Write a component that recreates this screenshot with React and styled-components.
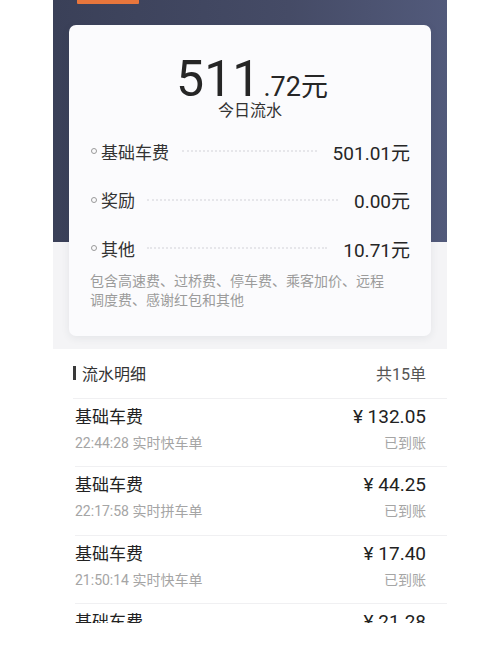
import React from "react";
import styled, { createGlobalStyle } from "styled-components";

const GlobalStyle = createGlobalStyle`
  html, body {
    margin: 0;
    padding: 0;
    background: #ffffff;
  }
  body {
    font-family: "Roboto", "Noto Sans CJK SC", sans-serif;
    color: #262626;
  }
`;

const Page = styled.div`
  width: 500px;
  height: 666px;
  display: flex;
  justify-content: center;
  background: #fff;
`;

const Screen = styled.div`
  width: 394px;
  height: 623px;
  overflow: hidden;
  display: flex;
  flex-direction: column;
  background: #fff;
`;

const Top = styled.div`
  position: relative;
  padding: 25px 16px 13px;
  background:
    linear-gradient(90deg, #3a4058 0%, #454b66 60%, #525a7b 100%) top / 100% 242px no-repeat,
    #f4f4f6;
`;

const OrangeTab = styled.div`
  position: absolute;
  top: 0;
  left: 24px;
  width: 62px;
  height: 4px;
  background: #e8763c;
  border-radius: 0 0 1px 1px;
`;

const Card = styled.div`
  background: #fbfbfd;
  border-radius: 7px;
  box-shadow: 0 2px 8px rgba(40, 45, 70, 0.08);
  padding: 29px 21px 26px;
`;

const Total = styled.div`
  display: flex;
  justify-content: center;
  align-items: baseline;
  line-height: 1;
  color: #262626;
  padding-left: 4px;
`;

const BigNum = styled.span`
  font-size: 50px;
`;

const SmallNum = styled.span`
  font-size: 27px;
  margin-left: 3px;
`;

const TotalLabel = styled.div`
  text-align: center;
  font-size: 16px;
  line-height: 20px;
  color: #333;
  margin-top: -3px;
  margin-bottom: 6px;
`;

const Row = styled.div`
  display: flex;
  align-items: center;
  height: 48.5px;
`;

const Bullet = styled.span`
  width: 4px;
  height: 4px;
  border: 1px solid #9a9a9a;
  border-radius: 50%;
  margin-right: 4px;
  margin-left: 1px;
`;

const RowLabel = styled.span`
  font-size: 17px;
  color: #333;
`;

const Dots = styled.span`
  flex: 1;
  margin: 0 16px 0 ${(p) => p.$gap || 13}px;
  border-top: 2px dotted #e6e6ea;
  height: 0;
`;

const RowValue = styled.span`
  font-size: 19px;
  color: #262626;
`;

const Note = styled.div`
  font-size: 14px;
  line-height: 19px;
  color: #9b9b9b;
  margin-top: -1px;
`;

const List = styled.div`
  background: #fff;
  padding-left: 22px;
`;

const ListHead = styled.div`
  display: flex;
  justify-content: space-between;
  align-items: center;
  height: 49px;
  padding-right: 21px;
  margin-left: -2px;
  border-bottom: 1px solid #f0f0f2;
`;

const HeadTitle = styled.div`
  display: flex;
  align-items: center;
  font-size: 16px;
  color: #333;
  &::before {
    content: "";
    width: 3px;
    height: 14px;
    background: #3a3a3a;
    margin-right: 6px;
  }
`;

const HeadCount = styled.div`
  font-size: 16px;
  color: #555;
`;

const Item = styled.div`
  height: 68.5px;
  box-sizing: border-box;
  padding: 8px 21px 0 0;
  border-bottom: 1px solid #f0f0f2;
  display: flex;
  flex-direction: column;
  gap: 7px;
`;

const Line = styled.div`
  display: flex;
  justify-content: space-between;
  align-items: center;
`;

const ItemTitle = styled.span`
  font-size: 17px;
  line-height: 20px;
  color: #222;
`;

const Amount = styled.span`
  font-size: 19px;
  line-height: 20px;
  color: #222;
`;

const Sub = styled.span`
  font-size: 14px;
  line-height: 18px;
  color: #a5a5a5;
`;

const fees = [
  { label: "基础车费", value: "501.01元", gap: 13 },
  { label: "奖励", value: "0.00元", gap: 12 },
  { label: "其他", value: "10.71元", gap: 12 },
];

const items = [
  { time: "22:44:28", type: "实时快车单", amount: "¥ 132.05" },
  { time: "22:17:58", type: "实时拼车单", amount: "¥ 44.25" },
  { time: "21:50:14", type: "实时快车单", amount: "¥ 17.40" },
  { time: "21:20:02", type: "实时快车单", amount: "¥ 21.28" },
];

export default function App() {
  return (
    <Page>
      <GlobalStyle />
      <Screen>
        <Top>
          <OrangeTab />
          <Card>
            <Total>
              <BigNum>511</BigNum>
              <SmallNum>.72元</SmallNum>
            </Total>
            <TotalLabel>今日流水</TotalLabel>
            {fees.map((f) => (
              <Row key={f.label}>
                <Bullet />
                <RowLabel>{f.label}</RowLabel>
                <Dots $gap={f.gap} />
                <RowValue>{f.value}</RowValue>
              </Row>
            ))}
            <Note>
              包含高速费、过桥费、停车费、乘客加价、远程
              <br />
              调度费、感谢红包和其他
            </Note>
          </Card>
        </Top>
        <List>
          <ListHead>
            <HeadTitle>流水明细</HeadTitle>
            <HeadCount>共15单</HeadCount>
          </ListHead>
          {items.map((it) => (
            <Item key={it.time}>
              <Line>
                <ItemTitle>基础车费</ItemTitle>
                <Amount>{it.amount}</Amount>
              </Line>
              <Line>
                <Sub>
                  {it.time} {it.type}
                </Sub>
                <Sub>已到账</Sub>
              </Line>
            </Item>
          ))}
        </List>
      </Screen>
    </Page>
  );
}
